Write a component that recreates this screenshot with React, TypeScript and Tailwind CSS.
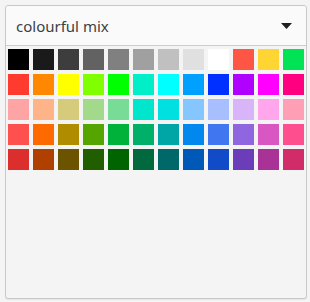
const swatches = [
  ['#000000', '#1a1a1a', '#3d3d3d', '#626262', '#808080', '#a0a0a0', '#c0c0c0', '#e0e0e0', '#ffffff', '#ff5545', '#ffd533', '#00e355'],
  ['#ff3b30', '#ff8800', '#ffff00', '#7fff00', '#00ff00', '#00eec8', '#00ffff', '#00a0ff', '#0030ff', '#b000ff', '#ff00ff', '#ff0080'],
  ['#ffa4a4', '#ffb388', '#d6cb7a', '#a2d98a', '#78dc96', '#00e6cc', '#00e0e0', '#86c6ff', '#a8bfff', '#d8b4f8', '#ffa6ec', '#ff9fb6'],
  ['#ff5050', '#ff6a00', '#b08d00', '#55a500', '#00b239', '#00b068', '#00a6a6', '#0088ee', '#4077f0', '#9066e0', '#d857c3', '#ff4e8e'],
  ['#dd2e2e', '#b04000', '#6b5300', '#215e00', '#006400', '#006a3e', '#006868', '#0059b6', '#114bc8', '#6b3db8', '#a83296', '#d22b6a'],
]

function PaletteDropdown() {
  return (
    <div className="ml-[5px] mt-[4px] w-[302px] h-[294px] border border-[#c8c8c8] rounded-[3px] bg-[#f4f4f4] shadow-[0_1px_1px_rgba(0,0,0,0.06)]">
      <div className="h-[40px] flex items-center justify-between pl-[10px] pr-[10px] bg-[#fafafa] border-b border-[#cdcdcd] rounded-t-[3px]">
        <span className="text-[15px] text-[#3c4043] font-['Noto_Sans',sans-serif] leading-none mt-[1px]">
          colourful mix
        </span>
        <svg width="11" height="6" viewBox="0 0 11 6" className="mr-[4px]">
          <path d="M0 0 H11 L5.5 6 Z" fill="#1e1e1e" />
        </svg>
      </div>
      <div className="grid grid-cols-[repeat(12,21px)] gap-[4px] pl-[2px] pt-[3px]">
        {swatches.flat().map((c, i) => (
          <div key={i} className="w-[21px] h-[21px]" style={{ backgroundColor: c }} />
        ))}
      </div>
    </div>
  )
}

export default function App() {
  return (
    <div className="w-[310px] h-[302px] bg-[#f4f4f4] overflow-hidden pt-px">
      <PaletteDropdown />
    </div>
  )
}
